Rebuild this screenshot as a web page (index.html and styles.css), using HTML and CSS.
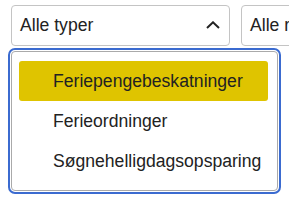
FILE: index.html
```html
<!DOCTYPE html>
<html>
	<head>
		<meta charset="UTF-8">
		<title>Filter</title>
		<link rel="stylesheet" href="styles.css">
	</head>
	<body>
		<div class="filters">
			<div class="select open">
				<span class="value">Alle typer</span>
				<svg class="chevron" width="14" height="8" viewBox="0 0 14 8">
					<path d="M1 7 L7 1.3 L13 7" fill="none" stroke="#222" stroke-width="2"/>
				</svg>
				<ul class="listbox">
					<li class="active">Feriepengebeskatninger</li>
					<li>Ferieordninger</li>
					<li>Søgnehelligdagsopsparing</li>
				</ul>
			</div>
			<div class="select second">
				<span class="value">Alle regler</span>
			</div>
		</div>
	</body>
</html>
```

FILE: styles.css
```css
*{
	margin: 0;
	padding: 0;
	box-sizing: border-box;
}
ul,li{
	list-style: none;
}
html,body{
	height: 100%;
	overflow: hidden;
	background: #fff;
}
body{
	font-family: "Liberation Sans", Arial, sans-serif;
	font-size: 17.6px;
	color: #222;
}

.filters{
	display: flex;
	gap: 11px;
	padding: 5px 0 0 11px;
	width: 600px;
}

.select{
	position: relative;
	display: flex;
	align-items: center;
	height: 41px;
	padding: 0 9px 0 8px;
	border: 1px solid #c4c4c4;
	border-radius: 4px;
	background: #fff;
}
.select.open{
	width: 219px;
	justify-content: space-between;
}
.select.second{
	width: 200px;
}

.chevron{
	display: block;
	margin-top: -1px;
}

.listbox{
	position: absolute;
	left: -1px;
	top: 45px;
	width: 267px;
	padding: 9px 9px 9px 7px;
	border: 1px solid #aaa;
	border-radius: 4px;
	outline: 2px solid #3b6bd0;
	outline-offset: 1px;
	background: #fff;
	z-index: 2;
}
.listbox li{
	height: 40px;
	line-height: 40px;
	padding-left: 34px;
	border-radius: 3px;
	white-space: nowrap;
}
.listbox li.active{
	background: #dfc400;
}
```
